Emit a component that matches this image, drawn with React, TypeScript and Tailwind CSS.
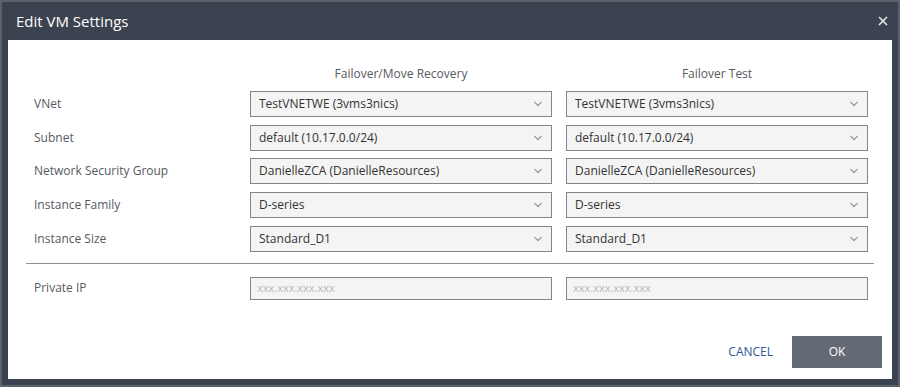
import React from "react";

const rows = [
  { label: "VNet", a: "TestVNETWE (3vms3nics)", b: "TestVNETWE (3vms3nics)" },
  { label: "Subnet", a: "default (10.17.0.0/24)", b: "default (10.17.0.0/24)" },
  {
    label: "Network Security Group",
    a: "DanielleZCA (DanielleResources)",
    b: "DanielleZCA (DanielleResources)",
  },
  { label: "Instance Family", a: "D-series", b: "D-series" },
  { label: "Instance Size", a: "Standard_D1", b: "Standard_D1" },
];

const Chevron = () => (
  <svg width="10" height="6" viewBox="0 0 10 6" className="shrink-0">
    <path d="M1.5 1 L5 4.5 L8.5 1" fill="none" stroke="#9a9ea5" strokeWidth="1.3" />
  </svg>
);

const SelectBox = ({ value }: { value: string }) => (
  <div className="h-[26px] flex items-center justify-between border border-[#80858e] bg-[#f4f4f4] pl-[8px] pr-[8px] text-[12px] text-[#333]">
    <span>{value}</span>
    <Chevron />
  </div>
);

const IpBox = () => (
  <div className="h-[23px] flex items-center border border-[#80858e] bg-[#f4f4f4] pl-[6px] text-[11px] text-[#b8b8b8]">
    xxx.xxx.xxx.xxx
  </div>
);

export default function App() {
  return (
    <div
      className="w-[900px] h-[387px] flex flex-col border-2 border-[#5c616c] bg-[#3c4350] px-[6px] pb-[6px]"
      style={{ fontFamily: '"Open Sans", "Liberation Sans", sans-serif' }}
    >
      <div className="h-[38px] flex items-center justify-between pl-[8px] pr-[4px]">
        <span className="text-[15px] text-white">Edit VM Settings</span>
        <svg width="10" height="10" viewBox="0 0 10 10">
          <path d="M1 1 L9 9 M9 1 L1 9" stroke="#e6e8eb" strokeWidth="1.6" />
        </svg>
      </div>
      <div className="flex-1 bg-white flex flex-col px-[18px] pt-[24px]">
        <div className="grid grid-cols-[210px_302px_302px] gap-x-[14px] text-[12px] text-[#555a61]">
          <div />
          <div className="h-[20px] flex items-center justify-center">Failover/Move Recovery</div>
          <div className="h-[20px] flex items-center justify-center">Failover Test</div>
        </div>
        <div className="grid grid-cols-[210px_302px_302px] gap-x-[14px] gap-y-[7.67px] mt-[7px]">
          {rows.map((r) => (
            <React.Fragment key={r.label}>
              <div className="h-[26px] flex items-center pl-[8px] text-[12px] text-[#555a61]">
                {r.label}
              </div>
              <SelectBox value={r.a} />
              <SelectBox value={r.b} />
            </React.Fragment>
          ))}
        </div>
        <div className="mt-[11px] h-px bg-[#8e9196]" />
        <div className="grid grid-cols-[210px_302px_302px] gap-x-[14px] mt-[13px]">
          <div className="h-[23px] flex items-center pl-[8px] text-[12px] text-[#555a61]">
            Private IP
          </div>
          <IpBox />
          <IpBox />
        </div>
        <div className="flex-1" />
        <div className="flex items-center justify-end gap-[19px] mr-[-8px] mb-[11px]">
          <span className="text-[12px] text-[#2f5592]">CANCEL</span>
          <div className="w-[90px] h-[32px] flex items-center justify-center bg-[#646a75] text-[12px] text-white">
            OK
          </div>
        </div>
      </div>
    </div>
  );
}
